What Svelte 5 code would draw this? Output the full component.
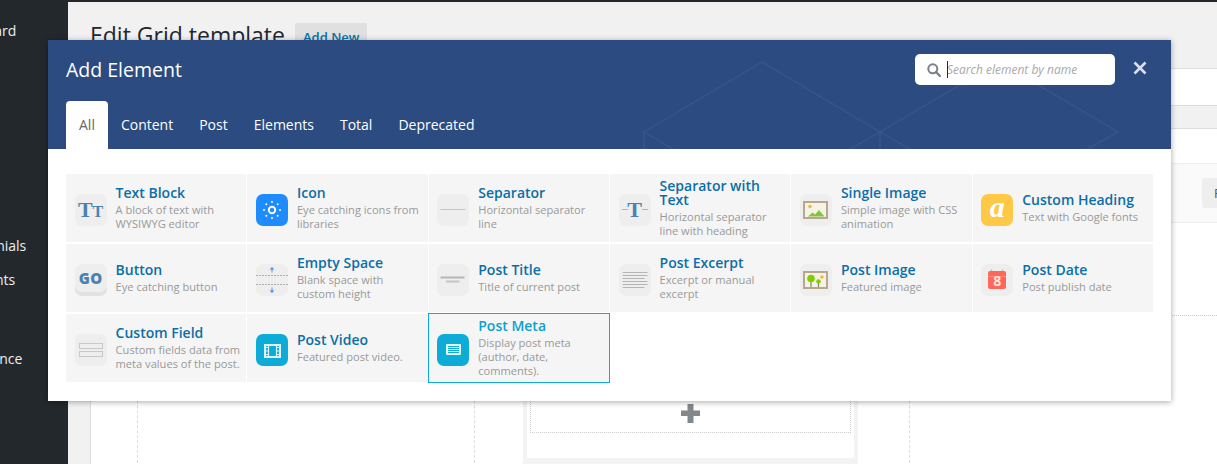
<script>
  const tabs = ['All', 'Content', 'Post', 'Elements', 'Total', 'Deprecated'];
  const menu = [
    { label: 'Dashboard', gap: 'first' },
    { label: 'Testimonials', gap: 'far' },
    { label: 'Comments', gap: 'near' },
    { label: 'Appearance', gap: 'mid' }
  ];
  const elements = [
    { icon: 'text', name: 'Text Block', desc: 'A block of text with WYSIWYG editor' },
    { icon: 'icon', name: 'Icon', desc: 'Eye catching icons from libraries' },
    { icon: 'sep', name: 'Separator', desc: 'Horizontal separator line' },
    { icon: 'septext', name: 'Separator with Text', desc: 'Horizontal separator line with heading' },
    { icon: 'image', name: 'Single Image', desc: 'Simple image with CSS animation' },
    { icon: 'heading', name: 'Custom Heading', desc: 'Text with Google fonts' },
    { icon: 'button', name: 'Button', desc: 'Eye catching button' },
    { icon: 'space', name: 'Empty Space', desc: 'Blank space with custom height' },
    { icon: 'title', name: 'Post Title', desc: 'Title of current post' },
    { icon: 'excerpt', name: 'Post Excerpt', desc: 'Excerpt or manual excerpt' },
    { icon: 'postimage', name: 'Post Image', desc: 'Featured image' },
    { icon: 'date', name: 'Post Date', desc: 'Post publish date' },
    { icon: 'field', name: 'Custom Field', desc: 'Custom fields data from meta values of the post.' },
    { icon: 'video', name: 'Post Video', desc: 'Featured post video.' },
    { icon: 'meta', name: 'Post Meta', desc: 'Display post meta (author, date, comments).', active: true }
  ];
</script>

<div class="page">
  <aside class="sidebar">
    {#each menu as item}
      <div class="menu-item {item.gap}">{item.label}</div>
    {/each}
  </aside>

  <main class="content">
    <div class="head">
      <h1>Edit Grid template</h1>
      <span class="add-new">Add New</span>
    </div>

    <div class="panel">
      <div class="panel-top"></div>
      <div class="panel-bar"></div>
      <div class="panel-gap"></div>
      <div class="panel-tools">
        <span class="tool-split"></span>
        <span class="tool-btn">F</span>
      </div>
      <div class="builder">
        <div class="col col-a"></div>
        <div class="col col-b">
          <div class="slot">
            <div class="slot-inner">
              <div class="drop">
                <svg width="19" height="19" viewBox="0 0 19 19"><path d="M6.5 0h6v6.500h6.500v5.500h-6.500v7h-6v-7h-6.500v-5.500h6.500z" fill="#82878c"/></svg>
              </div>
            </div>
          </div>
        </div>
        <div class="col col-c"></div>
      </div>
    </div>
  </main>

  <section class="modal">
    <header class="modal-head">
      <svg class="pattern" width="1123" height="109" viewBox="0 0 1123 109">
        <g fill="none" stroke="#325488" stroke-width="2">
          <path d="M625 109l-29-17v17M596 92l118-70 118 70-30 17M832 92v17M832 92l30 17M832 92l119-70 119 70-31 17"/>
        </g>
      </svg>
      <div class="head-row">
        <h2>Add Element</h2>
        <div class="search">
          <svg width="14" height="14" viewBox="0 0 14 14"><circle cx="5.800" cy="5.800" r="4.500" fill="none" stroke="#7b808a" stroke-width="2"/><path d="M9 9l4 4" stroke="#7b808a" stroke-width="2.400" stroke-linecap="round"/></svg>
          <input type="text" placeholder="Search element by name" />
          <span class="caret"></span>
        </div>
        <button class="close" aria-label="Close">
          <svg width="14" height="14" viewBox="0 0 14 14"><path d="M1.500 1.500l11 11M12.500 1.500l-11 11" stroke="#d8deea" stroke-width="2.600"/></svg>
        </button>
      </div>
      <nav class="tabs">
        {#each tabs as tab, i}
          <span class="tab" class:current={i === 0}>{tab}</span>
        {/each}
      </nav>
    </header>

    <div class="grid">
      {#each elements as el}
        <div class="cell" class:active={el.active}>
          <div class="ico ico-{el.icon}">
            {#if el.icon === 'text'}
              <span class="serif big">T</span><span class="serif small">T</span>
            {:else if el.icon === 'icon'}
              <svg viewBox="0 0 32 32"><circle cx="16" cy="16" r="3.200" fill="none" stroke="#fff" stroke-width="2"/><g fill="#fff"><circle cx="16" cy="8" r="1"/><circle cx="16" cy="24" r="1"/><circle cx="8" cy="16" r="1"/><circle cx="24" cy="16" r="1"/><circle cx="10.300" cy="10.300" r="1"/><circle cx="21.700" cy="10.300" r="1"/><circle cx="10.300" cy="21.700" r="1"/><circle cx="21.700" cy="21.700" r="1"/></g></svg>
            {:else if el.icon === 'sep'}
              <svg viewBox="0 0 32 32"><path d="M3.500 15.500h25" stroke="#c4c4c4" stroke-width="1"/></svg>
            {:else if el.icon === 'septext'}
              <svg viewBox="0 0 32 32"><path d="M3 15.500h6M23 15.500h6" stroke="#b5b5b5" stroke-width="1"/></svg>
              <span class="serif sep-t">T</span>
            {:else if el.icon === 'image'}
              <svg viewBox="0 0 32 32"><rect x="4" y="8" width="23" height="16" fill="#f4f3e6" stroke="#b8a78f" stroke-width="2"/><circle cx="10" cy="12.500" r="1.800" fill="#f7b733"/><path d="M8 22.500l4.500-4 2.500 2 4-4.500 5.500 6.500z" fill="#86c440"/></svg>
            {:else if el.icon === 'heading'}
              <span class="serif letter">a</span>
            {:else if el.icon === 'button'}
              <span class="go">GO</span>
            {:else if el.icon === 'space'}
              <svg viewBox="0 0 32 32"><path d="M0 11.500h32M0 20.500h32" stroke="#b0b0b0" stroke-width="1" stroke-dasharray="2 1"/><path d="M15.500 8.500h1v-3h2l-2.500-2.500-2.500 2.500h2zM15.500 23.500h1v3h2l-2.500 2.500-2.500-2.500h2z" fill="#4b92e0"/></svg>
            {:else if el.icon === 'title'}
              <svg viewBox="0 0 32 32"><path d="M3.500 13.500h24" stroke="#b5b5b5" stroke-width="2"/><path d="M9 17.500h13.500" stroke="#c4c4c4" stroke-width="2"/></svg>
            {:else if el.icon === 'excerpt'}
              <svg viewBox="0 0 32 32"><path d="M3.500 8.500h25M3.500 11.500h25M3.500 14.500h22M3.500 17.500h25M3.500 20.500h25M3.500 23.500h22" stroke="#b5b5b5" stroke-width="1"/></svg>
            {:else if el.icon === 'postimage'}
              <svg viewBox="0 0 32 32"><rect x="4" y="8" width="23" height="16" fill="#f4f3e6" stroke="#b8a78f" stroke-width="2"/><path d="M11 17v6M18.500 18v5" stroke="#8a7f5f" stroke-width="1.200"/><circle cx="11" cy="14.500" r="3.800" fill="#7ed000"/><circle cx="18.500" cy="17.500" r="2.300" fill="#7ed000"/><circle cx="22" cy="13" r="1.800" fill="#f7b733"/></svg>
            {:else if el.icon === 'date'}
              <svg viewBox="0 0 32 32"><path d="M10.500 5v4M21.500 5v4" stroke="#c9c9c9" stroke-width="1.500"/><rect x="7" y="7" width="18" height="18" rx="2" fill="#ff6759"/><path d="M7 12.500h18" stroke="#ff8a7f" stroke-width="1"/></svg>
              <span class="day">8</span>
            {:else if el.icon === 'field'}
              <svg viewBox="0 0 32 32"><rect x="4.500" y="9.500" width="23" height="5" fill="none" stroke="#c8c8c8"/><rect x="4.500" y="17.500" width="23" height="5" fill="none" stroke="#c8c8c8"/></svg>
            {:else if el.icon === 'video'}
              <svg viewBox="0 0 32 32"><rect x="9" y="11" width="15" height="12" fill="none" stroke="#dff4fa" stroke-width="2"/><path d="M12.500 11v12M20.500 11v12M8 17h4M21 17h4M8 13.500h4M8 20.500h4M21 13.500h4M21 20.500h4" stroke="#dff4fa" stroke-width="1.200"/></svg>
            {:else if el.icon === 'meta'}
              <svg viewBox="0 0 32 32"><rect x="9" y="10" width="15" height="11" rx="1" fill="#e4f6fb"/><path d="M11 12.500h11M11 14.500h11M11 16.500h11M11 18.500h11" stroke="#0dacd6" stroke-width="1"/></svg>
            {/if}
          </div>
          <div class="text">
            <div class="name">{el.name}</div>
            <div class="desc">{el.desc}</div>
          </div>
        </div>
      {/each}
    </div>
  </section>
</div>

<style>
  :global(body) {
    margin: 0;
    overflow: hidden;
    font-family: "Open Sans", sans-serif;
  }

  .page {
    position: relative;
    display: flex;
    width: 1217px;
    height: 464px;
    overflow: hidden;
    background: #f1f1f1;
    border-top: 2px solid #23282d;
    box-sizing: border-box;
  }

  .sidebar {
    flex: 0 0 68px;
    background: #23282d;
    color: #eee;
    font-size: 14px;
    line-height: 20px;
    overflow: hidden;
  }
  .menu-item {
    margin-left: -56px;
    white-space: nowrap;
  }
  .menu-item.first { margin-top: 19px; }
  .menu-item.far { margin-top: 195px; }
  .menu-item.near { margin-top: 14px; }
  .menu-item.mid { margin-top: 59px; }

  .content {
    flex: 1;
    min-width: 0;
    padding-left: 22px;
  }

  .head {
    display: flex;
    align-items: flex-start;
    gap: 10px;
    height: 66px;
    padding-top: 19px;
    box-sizing: border-box;
  }
  h1 {
    margin: 0;
    font-size: 23px;
    font-weight: 400;
    line-height: 29px;
    color: #23282d;
    white-space: nowrap;
  }
  .add-new {
    margin-top: 2px;
    padding: 0 8px;
    height: 28px;
    line-height: 28px;
    border-radius: 2px;
    background: #e0e0e0;
    color: #0073aa;
    font-size: 13px;
    font-weight: 600;
  }

  .panel {
    height: 396px;
    background: #fff;
    border-top: 1px solid #ddd;
    border-left: 1px solid #ddd;
  }
  .panel-top { height: 36px; }
  .panel-bar {
    height: 22px;
    background: #f1f1f1;
    border-top: 1px solid #ddd;
    border-bottom: 1px solid #ddd;
  }
  .panel-gap { height: 34px; }
  .panel-tools {
    display: flex;
    align-items: center;
    height: 58px;
    background: #fafafa;
    border-top: 1px solid #eee;
    border-bottom: 1px solid #eee;
    padding-left: 1091px;
  }
  .tool-split {
    width: 1px;
    height: 58px;
    background: #eee;
  }
  .tool-btn {
    margin-left: 20px;
    width: 40px;
    height: 30px;
    padding-left: 12px;
    box-sizing: border-box;
    line-height: 30px;
    font-size: 13px;
    color: #555;
    background: #eee;
    border-radius: 3px;
  }

  .builder {
    display: flex;
    height: 147px;
    margin-top: 92px;
    border-top: 1px dotted #ccc;
    padding-left: 46px;
    margin-left: 0;
  }
  .col {
    border-left: 1px dashed #ddd;
    box-sizing: border-box;
  }
  .col-a { width: 337px; }
  .col-b {
    width: 435px;
    padding-left: 48px;
  }
  .col-c { flex: 1; }

  .slot {
    width: 335px;
    height: 149px;
    box-sizing: border-box;
    padding: 12px 4px 0;
    background: #f3f3f3;
  }
  .slot-inner {
    height: 130px;
    padding: 0 3px;
    background: #fff;
  }
  .drop {
    display: flex;
    align-items: center;
    justify-content: center;
    height: 105px;
    padding-top: 65px;
    box-sizing: border-box;
    border: 1px dotted #ccc;
  }
  .drop svg { display: block; }

  .modal {
    position: absolute;
    left: 48px;
    top: 38px;
    width: 1123px;
    height: 361px;
    background: #fff;
    box-shadow: 0 1px 6px rgba(0, 0, 0, 0.35);
  }
  .modal-head {
    position: relative;
    height: 109px;
    background: #2c4b80;
    box-sizing: border-box;
    padding: 14px 18px 0;
    overflow: hidden;
  }
  .pattern {
    position: absolute;
    left: 0;
    top: 0;
  }
  .head-row {
    position: relative;
    display: flex;
    align-items: center;
    height: 31px;
  }
  h2 {
    flex: 1;
    margin: 0;
    font-size: 19.500px;
    font-weight: 400;
    line-height: 31px;
    color: #fff;
  }
  .search {
    position: relative;
    display: flex;
    align-items: center;
    width: 200px;
    height: 31px;
    padding-left: 12px;
    box-sizing: border-box;
    background: #fff;
    border-radius: 5px;
  }
  .search svg { flex: none; }
  .search input {
    width: 160px;
    margin-left: 6px;
    padding: 0;
    border: 0;
    outline: 0;
    background: transparent;
    font-family: inherit;
    font-size: 12px;
    font-style: italic;
    color: #555;
  }
  .search input::placeholder {
    color: #a9a9a9;
    opacity: 1;
  }
  .caret {
    position: absolute;
    left: 32px;
    top: 7px;
    width: 1px;
    height: 17px;
    background: #23282d;
  }
  .close {
    width: 14px;
    height: 14px;
    margin: 0 6px 4px 18px;
    padding: 0;
    border: 0;
    background: none;
  }
  .close svg { display: block; }

  .tabs {
    position: relative;
    display: flex;
    margin-top: 16px;
  }
  .tab {
    height: 48px;
    padding: 0 13px;
    line-height: 48px;
    font-size: 14px;
    color: #fff;
  }
  .tab.current {
    background: #fff;
    color: #666;
    border-radius: 4px 4px 0 0;
  }

  .grid {
    display: grid;
    grid-template-columns: repeat(6, 1fr);
    grid-auto-rows: 68px;
    gap: 2px 1px;
    padding: 25px 18px 19px;
  }
  .cell {
    display: flex;
    align-items: center;
    gap: 9px;
    padding-left: 8.600px;
    box-sizing: border-box;
    background: #f5f5f5;
  }
  .cell.active {
    outline: 1px solid #0dacd6;
  }
  .cell.active .name { color: #0d9fcf; }

  .ico {
    position: relative;
    flex: 0 0 32px;
    display: flex;
    align-items: center;
    justify-content: center;
    width: 32px;
    height: 32px;
    margin-top: 3px;
    border-radius: 7px;
    background: #eee;
    overflow: hidden;
  }
  .ico svg {
    position: absolute;
    left: 0;
    top: 0;
    width: 32px;
    height: 32px;
  }
  .ico-icon { background: #1e8cff; }
  .ico-heading { background: #ffc845; }
  .ico-video, .ico-meta { background: #0dacd6; }
  .ico-button { box-shadow: inset 0 -4px 0 #e2e2e2; }

  .serif {
    font-family: "Liberation Serif", serif;
    font-weight: 700;
    color: #4b82b1;
    line-height: 1;
  }
  .big { font-size: 22px; }
  .small { font-size: 16px; margin-top: 4px; }
  .sep-t { position: relative; font-size: 22px; }
  .letter {
    font-size: 30px;
    font-style: italic;
    color: #fff;
    margin-top: -5px;
  }
  .go {
    font-size: 15px;
    font-weight: 800;
    letter-spacing: 0.3px;
    color: #4b82b1;
    margin-top: -3px;
  }
  .day {
    position: relative;
    font-size: 14px;
    font-weight: 700;
    color: #ffe3df;
    margin-top: 1px;
  }

  .text {
    min-width: 0;
    max-width: 126px;
  }
  .name {
    font-size: 14px;
    font-weight: 600;
    line-height: 14px;
    color: #0b6ea8;
    margin-bottom: 3px;
  }
  .desc {
    font-size: 11.100px;
    line-height: 14px;
    color: #999;
  }
</style>
